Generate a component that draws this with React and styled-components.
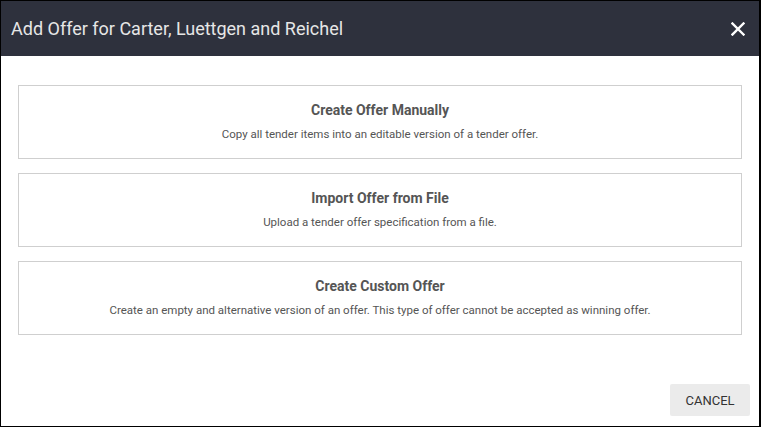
import React from 'react';
import styled, { createGlobalStyle } from 'styled-components';

const GlobalStyle = createGlobalStyle`
  html, body {
    margin: 0;
    padding: 0;
    background: #fff;
  }
  * {
    box-sizing: border-box;
  }
`;

const Dialog = styled.div`
  width: 761px;
  height: 427px;
  border: 1px solid #000;
  border-right-width: 2px;
  display: flex;
  flex-direction: column;
  font-family: Roboto, 'Liberation Sans', sans-serif;
  background: #fff;
`;

const Header = styled.header`
  height: 55px;
  flex-shrink: 0;
  background: #2e313d;
  display: flex;
  align-items: center;
  justify-content: space-between;
  padding: 0 11px 0 10px;

  h1 {
    margin: 0;
    font-size: 18px;
    font-weight: 400;
    color: #e6e6e6;
  }
`;

const CloseButton = styled.button`
  border: none;
  background: none;
  padding: 0;
  width: 20px;
  height: 20px;
  display: flex;
  align-items: center;
  justify-content: center;
  cursor: pointer;
`;

const Body = styled.main`
  flex: 1;
  padding: 29px 17px 0 17px;
  display: flex;
  flex-direction: column;
  gap: 14px;
`;

const OptionCard = styled.button`
  width: 100%;
  height: 74px;
  border: 1px solid #cfcfcf;
  background: #fff;
  display: flex;
  flex-direction: column;
  align-items: center;
  justify-content: center;
  gap: 9px;
  font-family: inherit;
  cursor: pointer;
  padding: 0 0 2px;

  h2 {
    margin: 0;
    font-size: 14px;
    font-weight: 700;
    color: #555;
  }
  p {
    margin: 0;
    font-size: 11.5px;
    color: #555;
  }
`;

const Footer = styled.footer`
  display: flex;
  justify-content: flex-end;
  padding: 0 9px 10px 0;
`;

const CancelButton = styled.button`
  width: 80px;
  height: 32px;
  border: none;
  border-radius: 2px;
  background: #ebebeb;
  color: #333;
  font-family: inherit;
  font-size: 13px;
  font-weight: 400;
  cursor: pointer;
`;

const options = [
  {
    title: 'Create Offer Manually',
    desc: 'Copy all tender items into an editable version of a tender offer.',
  },
  {
    title: 'Import Offer from File',
    desc: 'Upload a tender offer specification from a file.',
  },
  {
    title: 'Create Custom Offer',
    desc: 'Create an empty and alternative version of an offer. This type of offer cannot be accepted as winning offer.',
  },
];

const App = () => {
  return (
    <>
      <GlobalStyle />
      <Dialog>
        <Header>
          <h1>Add Offer for Carter, Luettgen and Reichel</h1>
          <CloseButton aria-label='close'>
            <svg width='14' height='14' viewBox='0 0 14 14'>
              <path
                d='M1.5 1.5 L12.5 12.5 M12.5 1.5 L1.5 12.5'
                stroke='#fff'
                strokeWidth='2.4'
                strokeLinecap='square'
              />
            </svg>
          </CloseButton>
        </Header>
        <Body>
          {options.map((o) => (
            <OptionCard key={o.title}>
              <h2>{o.title}</h2>
              <p>{o.desc}</p>
            </OptionCard>
          ))}
        </Body>
        <Footer>
          <CancelButton>CANCEL</CancelButton>
        </Footer>
      </Dialog>
    </>
  );
};

export default App;
